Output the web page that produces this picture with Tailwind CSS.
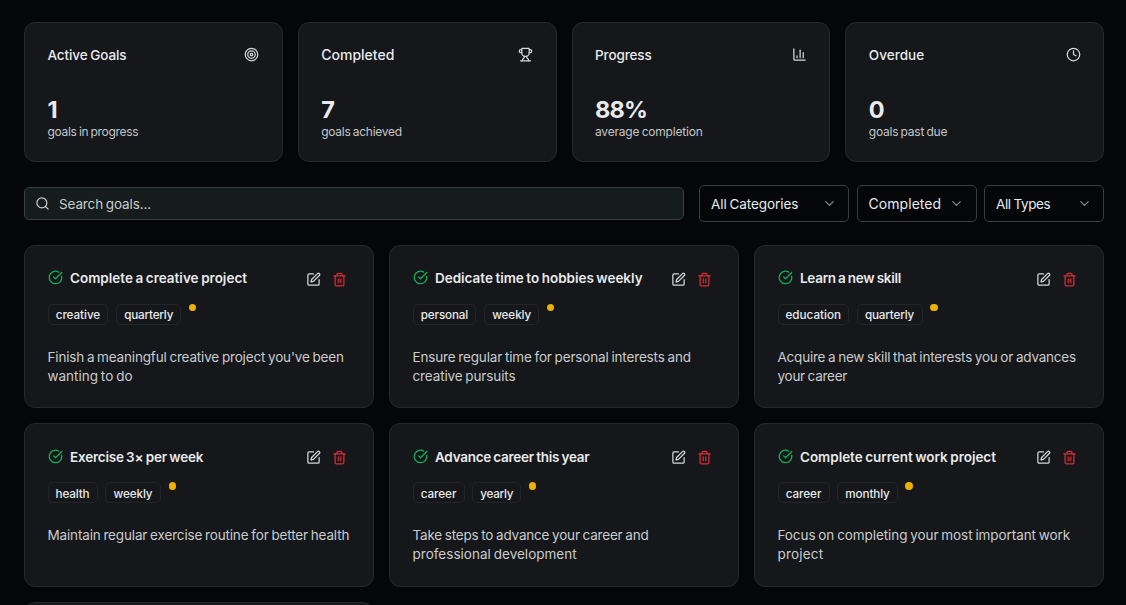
<!DOCTYPE html>
<html lang="en">
<head>
<meta charset="utf-8">
<title>Goals</title>
<script src="https://cdn.jsdelivr.net/npm/@tailwindcss/browser@4"></script>
</head>
<body class="h-[605px] overflow-hidden bg-[#040608] font-['Inter',sans-serif] text-[13.5px] text-[#e8eaec] [word-spacing:-0.06em]">

<svg class="hidden" xmlns="http://www.w3.org/2000/svg">
  <symbol id="check" viewBox="0 0 24 24"><path d="M21.801 10A10 10 0 1 1 17 3.335"/><path d="m9 11 3 3L22 4"/></symbol>
  <symbol id="edit" viewBox="0 0 24 24"><path d="M12 3H5a2 2 0 0 0-2 2v14a2 2 0 0 0 2 2h14a2 2 0 0 0 2-2v-7"/><path d="M18.375 2.625a1 1 0 0 1 3 3l-9.013 9.014a2 2 0 0 1-.853.505l-2.873.84a.5.5 0 0 1-.62-.62l.84-2.873a2 2 0 0 1 .506-.852z"/></symbol>
  <symbol id="trash" viewBox="0 0 24 24"><path d="M3 6h18"/><path d="M19 6v14c0 1-1 2-2 2H7c-1 0-2-1-2-2V6"/><path d="M8 6V4c0-1 1-2 2-2h4c1 0 2 1 2 2v2"/><path d="M10 11v6"/><path d="M14 11v6"/></symbol>
  <symbol id="chevron" viewBox="0 0 24 24"><path d="m6 9 6 6 6-6"/></symbol>
</svg>

<main class="flex h-[605px] flex-col overflow-hidden pt-[22px] pr-[22px] pl-[24px]">
  <section class="grid h-[140px] shrink-0 grid-cols-4 gap-[15px]">
    <div class="flex flex-col rounded-[11px] border border-[#26292b] bg-[#15171a] px-[22.5px] pt-[24px]">
      <div class="flex h-[15px] items-center justify-between">
        <h3 class="mt-[2px] font-medium tracking-[-0.1px]">Active Goals</h3>
        <svg class="size-[15px] fill-none stroke-[#d6d8da] stroke-2" viewBox="0 0 24 24"><circle cx="12" cy="12" r="10"/><circle cx="12" cy="12" r="6"/><circle cx="12" cy="12" r="2"/></svg>
      </div>
      <p class="mt-[34px] text-[23.5px] leading-[28px] font-bold">1</p>
      <p class="text-[12px] leading-[16px] tracking-[-0.304px] text-[#c3c6c8]">goals in progress</p>
    </div>
    <div class="flex flex-col rounded-[11px] border border-[#26292b] bg-[#15171a] px-[22.5px] pt-[24px]">
      <div class="flex h-[15px] items-center justify-between">
        <h3 class="text-[14px] font-medium">Completed</h3>
        <svg class="size-[15px] fill-none stroke-[#d6d8da] stroke-2" stroke-linecap="round" stroke-linejoin="round" viewBox="0 0 24 24"><path d="M10 14.66v1.626a2 2 0 0 1-.976 1.696A5 5 0 0 0 7 21.978"/><path d="M14 14.66v1.626a2 2 0 0 0 .976 1.696A5 5 0 0 1 17 21.978"/><path d="M18 9h1.5a1 1 0 0 0 0-5H18"/><path d="M4 22h16"/><path d="M6 9a6 6 0 0 0 12 0V3a1 1 0 0 0-1-1H7a1 1 0 0 0-1 1z"/><path d="M6 9H4.5a1 1 0 0 1 0-5H6"/></svg>
      </div>
      <p class="mt-[34px] text-[23.5px] leading-[28px] font-bold">7</p>
      <p class="text-[12px] leading-[16px] tracking-[-0.28px] text-[#c3c6c8]">goals achieved</p>
    </div>
    <div class="flex flex-col rounded-[11px] border border-[#26292b] bg-[#15171a] px-[22.5px] pt-[24px]">
      <div class="flex h-[15px] items-center justify-between">
        <h3 class="mt-[2px] font-medium tracking-[-0.12px]">Progress</h3>
        <svg class="size-[15px] fill-none stroke-[#d6d8da] stroke-2" stroke-linecap="round" stroke-linejoin="round" viewBox="0 0 24 24"><path d="M3 3v16a2 2 0 0 0 2 2h16"/><path d="M18 17V9"/><path d="M13 17V5"/><path d="M8 17v-3"/></svg>
      </div>
      <p class="mt-[34px] text-[23.5px] leading-[28px] font-bold tracking-[-0.823px]">88%</p>
      <p class="text-[12px] leading-[16px] tracking-[-0.2px] text-[#c3c6c8]">average completion</p>
    </div>
    <div class="flex flex-col rounded-[11px] border border-[#26292b] bg-[#15171a] px-[22.5px] pt-[24px]">
      <div class="flex h-[15px] items-center justify-between">
        <h3 class="mt-[2px] font-medium tracking-[0.05px]">Overdue</h3>
        <svg class="size-[15px] fill-none stroke-[#d6d8da] stroke-2" stroke-linecap="round" stroke-linejoin="round" viewBox="0 0 24 24"><circle cx="12" cy="12" r="10"/><path d="M12 6v6l4 2"/></svg>
      </div>
      <p class="mt-[34px] text-[23.5px] leading-[28px] font-bold">0</p>
      <p class="text-[12px] leading-[16px] tracking-[-0.23px] text-[#c3c6c8]">goals past due</p>
    </div>
  </section>

  <section class="mt-[23px] flex h-[37px] shrink-0 items-center gap-[15px]">
    <div class="flex h-[33px] flex-1 items-center rounded-[5px] border border-[#394041] bg-[#161b1b] pl-[10px]">
      <svg class="size-[15px] fill-none stroke-[#c9cccd] stroke-2" stroke-linecap="round" viewBox="0 0 24 24"><circle cx="11" cy="11" r="8"/><path d="m21 21-4.3-4.3"/></svg>
      <span class="mt-[2px] ml-[9px] tracking-[-0.13px] text-[#c9cccd]">Search goals...</span>
    </div>
    <div class="flex h-full gap-[7.5px]">
      <div class="flex w-[150px] items-center justify-between rounded-[5px] border border-[#3a3e40] pr-[11.5px] pl-[11px]">
        <span class="mt-[2px] tracking-[-0.08px]">All Categories</span>
        <svg class="size-[15px] fill-none stroke-[#85898b] stroke-2" stroke-linecap="round" stroke-linejoin="round"><use href="#chevron"/></svg>
      </div>
      <div class="flex w-[120px] items-center justify-between rounded-[5px] border border-[#3a3e40] pr-[12px] pl-[11px]">
        <span class="text-[14px] tracking-[0.06px]">Completed</span>
        <svg class="size-[15px] fill-none stroke-[#85898b] stroke-2" stroke-linecap="round" stroke-linejoin="round"><use href="#chevron"/></svg>
      </div>
      <div class="flex w-[120px] items-center justify-between rounded-[5px] border border-[#3a3e40] pr-[11.5px] pl-[11px]">
        <span class="mt-[2px] tracking-[-0.36px]">All Types</span>
        <svg class="size-[15px] fill-none stroke-[#85898b] stroke-2" stroke-linecap="round" stroke-linejoin="round"><use href="#chevron"/></svg>
      </div>
    </div>
  </section>

  <section class="mt-[23px] grid shrink-0 grid-cols-3 grid-rows-[163px_164px_3px] gap-[15px]">
    <article class="rounded-[11px] border border-[#26292b] bg-[#15171a] px-[22.5px] pt-[22.5px]">
      <div class="flex h-[19px] items-center">
        <svg class="mb-[1px] size-[15px] fill-none stroke-[#10b356] stroke-2" stroke-linecap="round" stroke-linejoin="round"><use href="#check"/></svg>
        <h3 class="ml-[7.5px] font-semibold">Complete a creative project</h3>
        <svg class="mt-[3px] ml-auto size-[15px] fill-none stroke-[#d6d8da] stroke-2" stroke-linecap="round" stroke-linejoin="round"><use href="#edit"/></svg>
        <svg class="mt-[3px] mr-[4px] ml-[11px] size-[15px] fill-none stroke-[#d92c36] stroke-2" stroke-linecap="round" stroke-linejoin="round"><use href="#trash"/></svg>
      </div>
      <div class="mt-[16px] flex h-[21px] gap-[7.5px] text-[11.7px] font-medium">
        <span class="flex items-center rounded-[5px] border border-[#222527] px-[7.2px] pt-[3px] tracking-[-0.057px]">creative</span>
        <span class="flex items-center rounded-[5px] border border-[#222527] px-[7.3px] pt-[3px] tracking-[-0.2px]">quarterly</span>
        <span class="size-[7.5px] rounded-full bg-[#efb100]"></span>
      </div>
      <p class="mt-[23px] leading-[19px] whitespace-nowrap text-[#c9cbcd]"><span class="block tracking-[-0.17px]">Finish a meaningful creative project you've been</span><span class="block tracking-[-0.02px]">wanting to do</span></p>
    </article>
    <article class="rounded-[11px] border border-[#26292b] bg-[#15171a] px-[22.5px] pt-[22.5px]">
      <div class="flex h-[19px] items-center">
        <svg class="mb-[1px] size-[15px] fill-none stroke-[#10b356] stroke-2" stroke-linecap="round" stroke-linejoin="round"><use href="#check"/></svg>
        <h3 class="ml-[7.5px] font-semibold tracking-[-0.025px]">Dedicate time to hobbies weekly</h3>
        <svg class="mt-[3px] ml-auto size-[15px] fill-none stroke-[#d6d8da] stroke-2" stroke-linecap="round" stroke-linejoin="round"><use href="#edit"/></svg>
        <svg class="mt-[3px] mr-[4px] ml-[11px] size-[15px] fill-none stroke-[#d92c36] stroke-2" stroke-linecap="round" stroke-linejoin="round"><use href="#trash"/></svg>
      </div>
      <div class="mt-[16px] flex h-[21px] gap-[7.5px] text-[11.7px] font-medium">
        <span class="flex items-center rounded-[5px] border border-[#222527] px-[7.2px] pt-[3px] tracking-[-0.135px]">personal</span>
        <span class="flex items-center rounded-[5px] border border-[#222527] px-[7.3px] pt-[3px] tracking-[-0.086px]">weekly</span>
        <span class="size-[7.5px] rounded-full bg-[#efb100]"></span>
      </div>
      <p class="mt-[23px] leading-[19px] whitespace-nowrap text-[#c9cbcd]"><span class="block tracking-[-0.16px]">Ensure regular time for personal interests and</span><span class="block tracking-[-0.13px]">creative pursuits</span></p>
    </article>
    <article class="rounded-[11px] border border-[#26292b] bg-[#15171a] px-[22.5px] pt-[22.5px]">
      <div class="flex h-[19px] items-center">
        <svg class="mb-[1px] size-[15px] fill-none stroke-[#10b356] stroke-2" stroke-linecap="round" stroke-linejoin="round"><use href="#check"/></svg>
        <h3 class="ml-[7.5px] font-semibold tracking-[-0.29px]">Learn a new skill</h3>
        <svg class="mt-[3px] ml-auto size-[15px] fill-none stroke-[#d6d8da] stroke-2" stroke-linecap="round" stroke-linejoin="round"><use href="#edit"/></svg>
        <svg class="mt-[3px] mr-[4px] ml-[11px] size-[15px] fill-none stroke-[#d92c36] stroke-2" stroke-linecap="round" stroke-linejoin="round"><use href="#trash"/></svg>
      </div>
      <div class="mt-[16px] flex h-[21px] gap-[7.5px] text-[11.7px] font-medium">
        <span class="flex items-center rounded-[5px] border border-[#222527] px-[7px] pt-[3px] tracking-[-0.016px]">education</span>
        <span class="flex items-center rounded-[5px] border border-[#222527] px-[7.5px] pt-[3px] tracking-[-0.2px]">quarterly</span>
        <span class="size-[7.5px] rounded-full bg-[#efb100]"></span>
      </div>
      <p class="mt-[23px] leading-[19px] whitespace-nowrap text-[#c9cbcd]"><span class="block tracking-[-0.214px]">Acquire a new skill that interests you or advances</span><span class="block tracking-[-0.27px]">your career</span></p>
    </article>

    <article class="rounded-[11px] border border-[#26292b] bg-[#15171a] px-[22.5px] pt-[23.5px]">
      <div class="flex h-[19px] items-center">
        <svg class="mb-[1px] size-[15px] fill-none stroke-[#10b356] stroke-2" stroke-linecap="round" stroke-linejoin="round"><use href="#check"/></svg>
        <h3 class="ml-[7.5px] font-semibold tracking-[-0.21px]">Exercise 3× per week</h3>
        <svg class="mt-[1px] ml-auto size-[15px] fill-none stroke-[#d6d8da] stroke-2" stroke-linecap="round" stroke-linejoin="round"><use href="#edit"/></svg>
        <svg class="mt-[1px] mr-[4px] ml-[11px] size-[15px] fill-none stroke-[#d92c36] stroke-2" stroke-linecap="round" stroke-linejoin="round"><use href="#trash"/></svg>
      </div>
      <div class="mt-[15.5px] flex h-[21px] gap-[7.5px] text-[11.7px] font-medium">
        <span class="flex items-center rounded-[5px] border border-[#222527] px-[7px] pt-[4px] tracking-[-0.133px]">health</span>
        <span class="flex items-center rounded-[5px] border border-[#222527] px-[7.5px] pt-[4px] tracking-[-0.086px]">weekly</span>
        <span class="size-[7.5px] rounded-full bg-[#efb100]"></span>
      </div>
      <p class="mt-[22.5px] leading-[19px] whitespace-nowrap text-[#c9cbcd]"><span class="block tracking-[-0.155px]">Maintain regular exercise routine for better health</span></p>
    </article>
    <article class="rounded-[11px] border border-[#26292b] bg-[#15171a] px-[22.5px] pt-[23.5px]">
      <div class="flex h-[19px] items-center">
        <svg class="mb-[1px] size-[15px] fill-none stroke-[#10b356] stroke-2" stroke-linecap="round" stroke-linejoin="round"><use href="#check"/></svg>
        <h3 class="ml-[7.5px] font-semibold tracking-[-0.26px]">Advance career this year</h3>
        <svg class="mt-[1px] ml-auto size-[15px] fill-none stroke-[#d6d8da] stroke-2" stroke-linecap="round" stroke-linejoin="round"><use href="#edit"/></svg>
        <svg class="mt-[1px] mr-[4px] ml-[11px] size-[15px] fill-none stroke-[#d92c36] stroke-2" stroke-linecap="round" stroke-linejoin="round"><use href="#trash"/></svg>
      </div>
      <div class="mt-[15.5px] flex h-[21px] gap-[7.5px] text-[11.7px] font-medium">
        <span class="flex items-center rounded-[5px] border border-[#222527] px-[7.2px] pt-[4px] tracking-[-0.06px]">career</span>
        <span class="flex items-center rounded-[5px] border border-[#222527] px-[7.2px] pt-[4px] tracking-[-0.263px]">yearly</span>
        <span class="size-[7.5px] rounded-full bg-[#efb100]"></span>
      </div>
      <p class="mt-[22.5px] leading-[19px] whitespace-nowrap text-[#c9cbcd]"><span class="block tracking-[-0.195px]">Take steps to advance your career and</span><span class="block tracking-[0.01px]">professional development</span></p>
    </article>
    <article class="rounded-[11px] border border-[#26292b] bg-[#15171a] px-[22.5px] pt-[23.5px]">
      <div class="flex h-[19px] items-center">
        <svg class="mb-[1px] size-[15px] fill-none stroke-[#10b356] stroke-2" stroke-linecap="round" stroke-linejoin="round"><use href="#check"/></svg>
        <h3 class="ml-[7.5px] font-semibold tracking-[-0.03px]">Complete current work project</h3>
        <svg class="mt-[1px] ml-auto size-[15px] fill-none stroke-[#d6d8da] stroke-2" stroke-linecap="round" stroke-linejoin="round"><use href="#edit"/></svg>
        <svg class="mt-[1px] mr-[4px] ml-[11px] size-[15px] fill-none stroke-[#d92c36] stroke-2" stroke-linecap="round" stroke-linejoin="round"><use href="#trash"/></svg>
      </div>
      <div class="mt-[15.5px] flex h-[21px] gap-[7.5px] text-[11.7px] font-medium">
        <span class="flex items-center rounded-[5px] border border-[#222527] px-[7.2px] pt-[4px] tracking-[-0.06px]">career</span>
        <span class="flex items-center rounded-[5px] border border-[#222527] px-[7.2px] pt-[4px] tracking-[-0.107px]">monthly</span>
        <span class="size-[7.5px] rounded-full bg-[#efb100]"></span>
      </div>
      <p class="mt-[22.5px] leading-[19px] whitespace-nowrap text-[#c9cbcd]"><span class="block tracking-[-0.08px]">Focus on completing your most important work</span><span class="block tracking-[0.2px]">project</span></p>
    </article>

    <article class="h-[163px] rounded-t-[11px] border border-b-0 border-[#26292b] bg-[#15171a]"></article>
  </section>
</main>
</body>
</html>
